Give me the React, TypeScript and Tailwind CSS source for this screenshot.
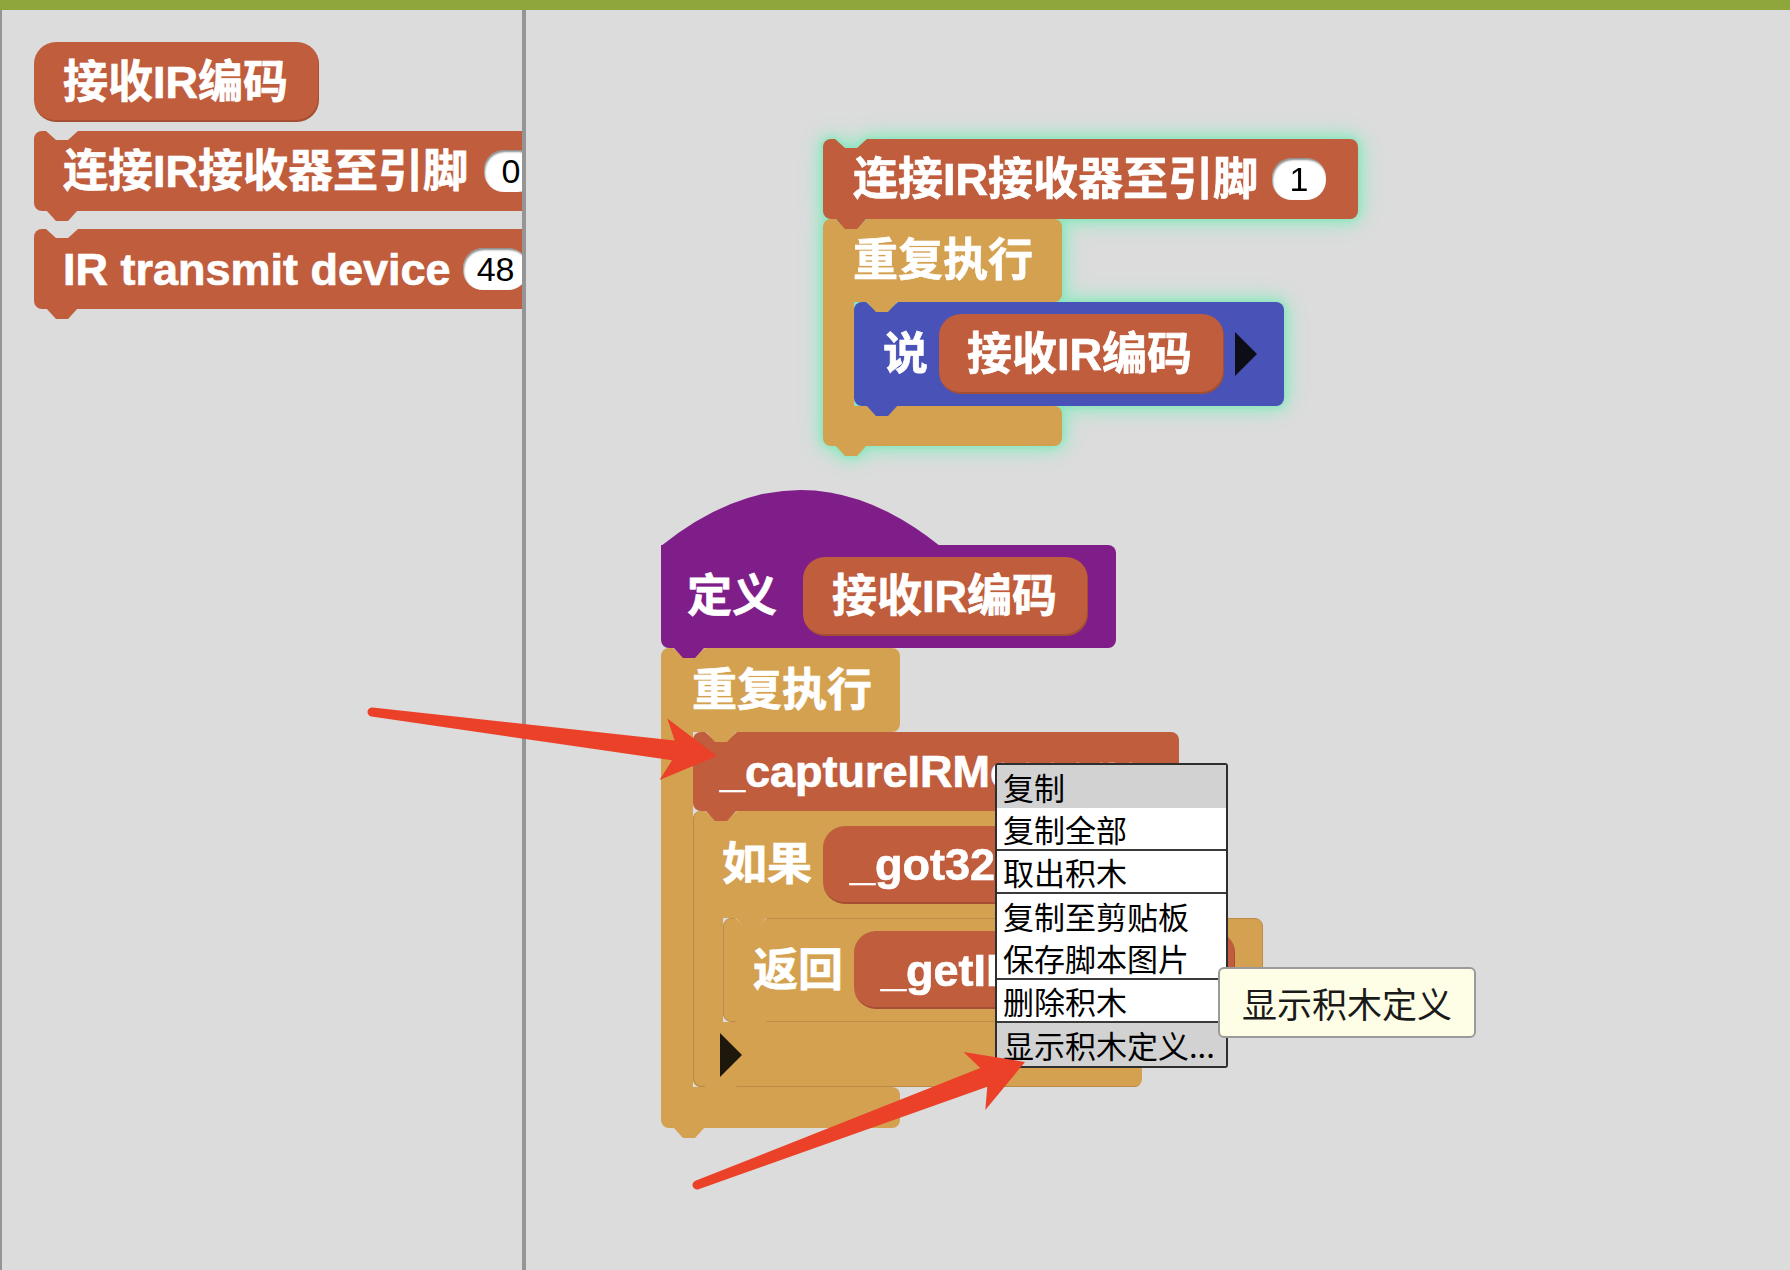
import React from "react";

const RED = "bg-[#bf5d3d]";
const TAN = "bg-[#d4a150]";
const BLUE = "bg-[#4852b7]";
const PURPLE = "bg-[#801e89]";
const NOTCH =
  "[clip-path:polygon(0_0,12px_0,22px_9px,34px_9px,44px_0,100%_0,100%_100%,0_100%)]";
const TXT =
  "text-white font-bold text-[45px] leading-none whitespace-nowrap [-webkit-text-stroke:0.7px_white]";

function Tab({ color, left }: { color: string; left: string }) {
  return (
    <div
      className={`absolute top-[calc(100%-1px)] z-10 h-[11px] w-[32px] ${left} ${color} [clip-path:polygon(0_0,100%_0,22px_100%,10px_100%)]`}
    />
  );
}

function Stmt({
  color,
  className = "",
  children,
  tab = true,
}: {
  color: string;
  className?: string;
  children?: React.ReactNode;
  tab?: boolean;
}) {
  return (
    <div className="relative shrink-0">
      <div className={`${color} ${NOTCH} flex items-center rounded-[8px] ${className}`}>{children}</div>
      {tab && <Tab color={color} left="left-[12px]" />}
    </div>
  );
}

function Reporter({ className = "", children }: { className?: string; children: React.ReactNode }) {
  return (
    <div
      className={`${RED} flex shrink-0 items-center overflow-hidden rounded-[22px] shadow-[inset_-1px_-2px_0_rgba(0,0,0,0.14)] ${className}`}
    >
      <span className={TXT}>{children}</span>
    </div>
  );
}

function Slot({ children }: { children: React.ReactNode }) {
  return (
    <div className="flex h-[42px] min-w-[54px] shrink-0 items-center justify-center rounded-[20px] bg-white px-[14px] font-['Liberation_Sans',sans-serif] text-[34px] font-normal leading-none text-black shadow-[inset_1px_2px_2px_rgba(0,0,0,0.45)]">
      {children}
    </div>
  );
}

function Tri({ className = "" }: { className?: string }) {
  return <div className={`h-0 w-0 shrink-0 border-y-[22px] border-l-[22px] border-y-transparent ${className}`} />;
}

function ArrowShape({ x, y, len, angle }: { x: number; y: number; len: number; angle: number }) {
  const L = len;
  const d = `M0,-4.5 L${L - 44},-10 L${L - 54},-31 L${L},0 L${L - 54},31 L${L - 44},10 L0,4.5 A4.5,4.5 0 0 1 0,-4.5 Z`;
  return <path d={d} fill="#ea4128" transform={`translate(${x} ${y}) rotate(${angle})`} />;
}

const menuItems: { label: string; bg: string; sep: boolean }[] = [
  { label: "复制", bg: "bg-[#d2d2d2]", sep: false },
  { label: "复制全部", bg: "bg-white", sep: true },
  { label: "取出积木", bg: "bg-white", sep: true },
  { label: "复制至剪贴板", bg: "bg-white", sep: false },
  { label: "保存脚本图片", bg: "bg-white", sep: true },
  { label: "删除积木", bg: "bg-white", sep: true },
  { label: "显示积木定义...", bg: "bg-[#d2d2d2]", sep: false },
];

export default function App() {
  return (
    <div className="relative h-[1270px] w-[1790px] overflow-hidden bg-[#dcdcdc] font-['Liberation_Sans','Noto_Sans_CJK_SC',sans-serif]">
      <div className="h-[10px] bg-[#8fa63c]" />
      <div className="flex h-[1260px]">
        {/* Palette */}
        <div className="relative h-full w-[526px] shrink-0 overflow-hidden border-l-2 border-r-4 border-[#959595]">
          <div className="flex flex-col items-start pl-[32px] pt-[32px]">
            <Reporter className="h-[80px] w-[285px] pl-[29px]">接收IR编码</Reporter>
            <div className="mt-[9px]">
              <Stmt color={RED} className="h-[80px] w-[600px] gap-[16px] pl-[29px]">
                <span className={TXT}>连接IR接收器至引脚</span>
                <Slot>0</Slot>
              </Stmt>
            </div>
            <div className="mt-[18px]">
              <Stmt color={RED} className="h-[80px] w-[600px] gap-[12px] pl-[29px]">
                <span className={TXT}>IR transmit device</span>
                <Slot>48</Slot>
              </Stmt>
            </div>
          </div>
        </div>

        {/* Workspace */}
        <div className="relative flex-1">
          {/* Script 1 (glowing) */}
          <div className="absolute left-[297px] top-[129px] flex flex-col items-start [filter:drop-shadow(0_0_3px_#86e4ba)_drop-shadow(0_0_7px_#94e6c2)_drop-shadow(0_0_10px_#a8e8cc)]">
            <Stmt color={RED} className="h-[80px] w-[535px] gap-[14px] pl-[30px]">
              <span className={TXT}>连接IR接收器至引脚</span>
              <Slot>1</Slot>
            </Stmt>
            <div className="relative flex flex-col items-start">
              <div className="relative">
                <div className={`${TAN} ${NOTCH} flex h-[83px] w-[239px] items-center rounded-r-[8px] rounded-tl-[8px] pl-[30px]`}>
                  <span className={TXT}>重复执行</span>
                </div>
                <Tab color={TAN} left="left-[43px]" />
              </div>
              <div className="flex">
                <div className={`${TAN} w-[31px]`} />
                <Stmt color={BLUE} className="h-[104px] w-[430px] pl-[29px]">
                  <span className={TXT}>说</span>
                  <Reporter className="ml-[11px] h-[80px] w-[285px] pl-[28px]">接收IR编码</Reporter>
                  <Tri className="ml-[11px] border-l-[#0d0d18]" />
                </Stmt>
              </div>
              <div className="relative">
                <div className={`${TAN} h-[40px] w-[239px] rounded-r-[8px] rounded-bl-[8px]`} />
                <Tab color={TAN} left="left-[12px]" />
              </div>
            </div>
          </div>

          {/* Script 2 (define) */}
          <div className="absolute left-[135px] top-[479px] flex flex-col items-start">
            <div className="relative flex flex-col items-start">
              <svg width="279" height="57" className="-mb-px block">
                <path d="M0 57 Q139.5 -55 279 57 Z" fill="#801e89" />
              </svg>
              <div className={`${PURPLE} flex h-[103px] w-[455px] items-center rounded-b-[8px] rounded-tr-[8px] pl-[26px]`}>
                <span className={TXT}>定义</span>
                <Reporter className="ml-[26px] h-[79px] w-[285px] pl-[29px]">接收IR编码</Reporter>
              </div>
              <Tab color={PURPLE} left="left-[12px]" />
            </div>
            {/* repeat */}
            <div className="relative flex flex-col items-start">
              <div className="relative">
                <div className={`${TAN} ${NOTCH} flex h-[84px] w-[239px] items-center rounded-r-[8px] rounded-tl-[8px] pl-[31px]`}>
                  <span className={TXT}>重复执行</span>
                </div>
                <Tab color={TAN} left="left-[44px]" />
              </div>
              <div className="flex">
                <div className={`${TAN} w-[32px]`} />
                <div className="flex flex-col items-start">
                  <Stmt color={RED} className="h-[79px] w-[486px] pl-[27px]">
                    <span className={TXT}>_captureIRMessage</span>
                  </Stmt>
                  {/* if block */}
                  <div className="relative flex flex-col items-start">
                    <div className="relative">
                      <div className={`${TAN} ${NOTCH} flex h-[107px] w-[520px] items-center rounded-r-[8px] rounded-tl-[8px] pl-[29px] shadow-[inset_1px_0_0_#b98b47]`}>
                        <span className={TXT}>如果</span>
                        <Reporter className="ml-[11px] h-[78px] w-[360px] pl-[27px]">_got32BitIRCode</Reporter>
                      </div>
                      <Tab color={TAN} left="left-[42px]" />
                    </div>
                    <div className="flex">
                      <div className={`${TAN} w-[30px] shadow-[inset_1px_0_0_#b98b47]`} />
                      <Stmt color={TAN} className="h-[104px] w-[540px] border border-[#bb8d49] pl-[29px]">
                        <span className={TXT}>返回</span>
                        <Reporter className="ml-[11px] h-[78px] w-[381px] pl-[27px]">_getIRMessage</Reporter>
                      </Stmt>
                    </div>
                    <div className="relative">
                      <div className={`${TAN} flex h-[65px] w-[449px] items-center rounded-r-[8px] rounded-bl-[8px] pl-[27px] shadow-[inset_1px_-1px_0_#b98b47]`}>
                        <Tri className="border-l-[#1e170b]" />
                      </div>
                      <Tab color={TAN} left="left-[12px]" />
                    </div>
                  </div>
                </div>
              </div>
              <div className="relative">
                <div className={`${TAN} h-[41px] w-[239px] rounded-r-[8px] rounded-bl-[8px]`} />
                <Tab color={TAN} left="left-[12px]" />
              </div>
            </div>
          </div>

          {/* Context menu */}
          <div className="absolute left-[469px] top-[753px] z-20 flex w-[233px] flex-col overflow-hidden rounded-[3px] border-2 border-[#2e2e2e] bg-white font-['Noto_Sans_CJK_SC','Liberation_Sans',sans-serif] text-[31px] leading-none text-black">
            {menuItems.map((m, i) => (
              <div
                key={i}
                className={`flex h-[43px] items-center whitespace-nowrap pl-[6px] ${m.bg} ${m.sep ? "border-b-2 border-[#3a3a3a]" : ""}`}
              >
                {m.label}
              </div>
            ))}
          </div>

          {/* Tooltip */}
          <div className="absolute left-[692px] top-[957px] z-30 flex h-[71px] w-[258px] items-center rounded-[6px] border-2 border-[#9a9a9a] bg-[#fefee6] pl-[22px] font-['Noto_Sans_CJK_SC','Liberation_Sans',sans-serif] text-[35px] leading-none text-[#1a1a1a]">
            显示积木定义
          </div>
        </div>
      </div>

      {/* Annotation arrows */}
      <svg className="pointer-events-none absolute left-0 top-0 z-40" width="1790" height="1270">
        <ArrowShape x={372} y={712} len={347.8} angle={7.27} />
        <ArrowShape x={697} y={1185} len={350.3} angle={-20.56} />
      </svg>
    </div>
  );
}
